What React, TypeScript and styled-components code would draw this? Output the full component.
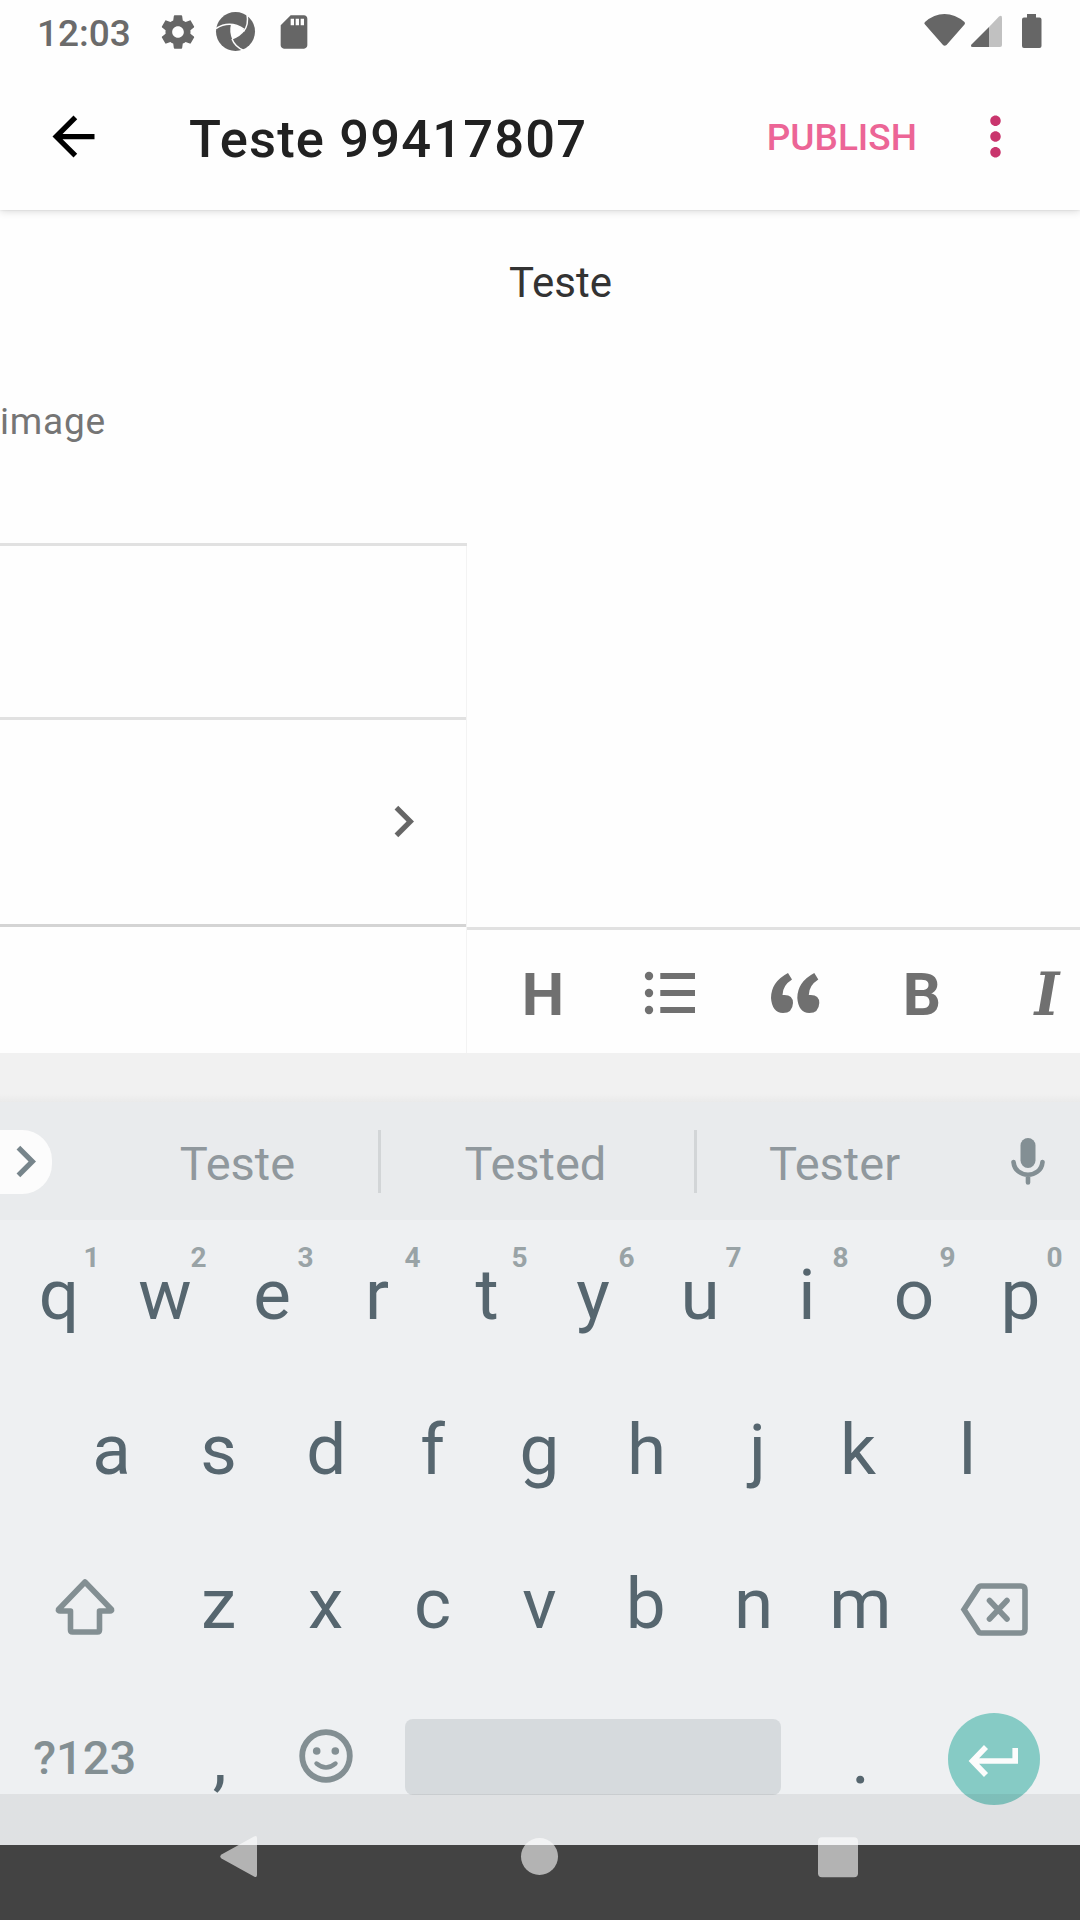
import React from "react";
import styled, { createGlobalStyle } from "styled-components";

const Global = createGlobalStyle`
  * { box-sizing: border-box; }
  body { margin: 0; background: #fff; font-family: Roboto, "Liberation Sans", sans-serif; }
  svg { display: block; flex: none; overflow: visible; }
`;

const Screen = styled.div`
  position: relative;
  width: 1080px;
  height: 1920px;
  overflow: hidden;
  display: flex;
  flex-direction: column;
  background: #fefefe;
`;

const StatusBar = styled.header`
  height: 63px;
  flex: none;
  display: flex;
  justify-content: space-between;
  padding: 0 38px 0 37px;
  color: #666;
`;

const StatusGroup = styled.div<{ $gap: number }>`
  display: flex;
  align-items: center;
  gap: ${(p) => p.$gap}px;
`;

const Clock = styled.span`
  font-size: 37px;
  font-weight: 500;
  line-height: 44px;
  margin-right: 9px;
  padding-top: 5px;
  color: #6b6b6b;
`;

const AppBar = styled.div`
  position: relative;
  z-index: 1;
  height: 147px;
  flex: none;
  display: flex;
  align-items: center;
  padding: 0 53px 0 42px;
  background: #fefefe;
  box-shadow: 0 1px 8px rgba(0, 0, 0, 0.16), 0 0 2px rgba(0, 0, 0, 0.1);
  clip-path: inset(0 0 -14px 0);
`;

const Title = styled.h1`
  flex: 1;
  margin: 0 0 0 84px;
  font-size: 52.5px;
  line-height: 62px;
  font-weight: 500;
  letter-spacing: 1.15px;
  color: #212121;
  padding-top: 4px;
`;

const Publish = styled.button`
  border: 0;
  padding: 2px 0 0;
  margin-right: 47px;
  background: none;
  font: 500 37px/44px Roboto, sans-serif;
  color: #ec6596;
`;

const Body = styled.main`
  height: 843px;
  flex: none;
  display: flex;
`;

const SettingsPane = styled.section`
  width: 467px;
  flex: none;
  display: flex;
  flex-direction: column;
`;

const SettingsRow = styled.div<{ $height: number; $line?: string }>`
  height: ${(p) => p.$height}px;
  display: flex;
  align-items: center;
  border-bottom: ${(p) => (p.$line ? `3px solid ${p.$line}` : "0")};
`;

const Divided = styled.div`
  flex: 1;
  border-right: 1px solid #f3f3f3;
`;

const Label = styled.span`
  padding-top: 90px;
  font-size: 37px;
  line-height: 44px;
  letter-spacing: 0.8px;
  color: #757575;
`;

const ChevronSlot = styled.span`
  margin: 0 0 2px 372px;
  color: #666;
`;

const EditorPane = styled.section`
  flex: 1;
  min-width: 0;
  display: flex;
  flex-direction: column;
`;

const EditorText = styled.div`
  flex: 1;
  padding: 48px 42px;
  font-size: 42px;
  line-height: 50px;
  color: #333;
`;

const Toolbar = styled.div`
  height: 126px;
  display: flex;
  align-items: center;
  overflow: hidden;
  border-top: 3px solid #e1e1e1;
  color: #707070;
`;

const Tool = styled.span<{ $width: number; $drop: number }>`
  flex: none;
  width: ${(p) => p.$width}px;
  display: flex;
  justify-content: center;
  padding-top: ${(p) => p.$drop}px;
  font-size: 60px;
  line-height: 70px;
  font-weight: 700;
`;

const ItalicMark = styled.span`
  font-family: "DejaVu Serif Condensed", "DejaVu Serif", serif;
  font-style: italic;
  font-stretch: condensed;
  font-size: 59px;
`;

const Spacer = styled.div`
  height: 49px;
  flex: none;
  background: linear-gradient(#f1f1f1 0 84%, #eaeaea 100%);
`;

const Suggestions = styled.div`
  height: 118px;
  flex: none;
  display: flex;
  align-items: center;
  background: #e9ebed;
`;

const Expand = styled.span`
  width: 52px;
  height: 64px;
  margin: 1px 45px 0 0;
  padding-right: 2px;
  border-radius: 0 30px 30px 0;
  background: #fcfcfc;
  color: #77858b;
  display: flex;
  align-items: center;
  justify-content: center;
`;

const Suggestion = styled.span<{ $width: number; $trim?: number }>`
  width: ${(p) => p.$width}px;
  padding: 6px ${(p) => p.$trim ?? 0}px 0 0;
  text-align: center;
  font-size: 47px;
  line-height: 56px;
  color: #90989d;
`;

const Separator = styled.i`
  width: 3px;
  height: 63px;
  background: #d2d5d7;
`;

const MicSlot = styled.span`
  margin-left: 37px;
`;

const Keys = styled.div`
  flex: 1;
  background: #eef0f2;
`;

const KeyRow = styled.div`
  height: 154.5px;
  display: flex;
  justify-content: center;
  padding: 0 5.5px 0 4.5px;
`;

const Key = styled.span<{ $wide?: boolean; $small?: boolean; $drop?: number }>`
  position: relative;
  width: ${(p) => (p.$wide ? 160.5 : 107)}px;
  flex: none;
  display: flex;
  align-items: center;
  justify-content: center;
  padding-top: ${(p) => Math.max(0, (p.$drop ?? 0) * 2)}px;
  padding-bottom: ${(p) => 5 + Math.max(0, (p.$drop ?? 0) * -2)}px;
  font-size: ${(p) => (p.$small ? 47 : 71)}px;
  font-weight: ${(p) => (p.$small ? 500 : 400)};
  color: ${(p) => (p.$small ? "#838f93" : "#56666f")};
`;

const Letter = styled.span<{ $shift: number }>`
  transform: translateX(${(p) => p.$shift}px);
`;

const Hint = styled.sup`
  position: absolute;
  top: 21px;
  left: 77px;
  width: 20px;
  text-align: center;
  font-size: 28px;
  line-height: 34px;
  font-weight: 700;
  color: #99a3a6;
`;

const SpaceBar = styled.span`
  width: 376px;
  height: 76px;
  margin: 35px 26px 0;
  border-radius: 8px;
  background: #d6dadd;
`;

const Enter = styled.span`
  width: 92px;
  height: 92px;
  margin-top: 2px;
  border-radius: 50%;
  background: #86cbc5;
  display: flex;
  align-items: center;
  justify-content: center;
`;

const NavBar = styled.nav`
  position: absolute;
  left: 0;
  right: 0;
  bottom: 0;
  height: 126px;
  display: flex;
  justify-content: center;
  gap: 261px;
  padding: 41px 2px 0 0;
  background: linear-gradient(rgba(0, 0, 0, 0.063) 0 51px, #434343 51px);
`;

const Chevron = () => (
  <svg width="63" height="63" viewBox="0 0 24 24" fill="currentColor">
    <path d="M10 6 8.59 7.41 13.17 12l-4.58 4.59L10 18l6-6z" />
  </svg>
);

const TOP = "qwertyuiop".split("");
const HOME = "asdfghjkl".split("");
const LOW = "zxcvbnm".split("");

// Optical centring: offsets each glyph so its ink sits in the middle of the key.
const OPTICAL: Record<string, number> = {
  r: -1.9,
  k: -2.4,
  j: 4,
  p: -0.6,
  b: -0.8,
  q: 0.9,
  d: 0.8,
  t: 1,
  ",": 1.2,
};

const Glyph = ({ char }: { char: string }) => (
  <Letter $shift={OPTICAL[char] ?? 0}>{char}</Letter>
);

export default function App() {
  return (
    <Screen>
      <Global />
      <StatusBar>
        <StatusGroup $gap={18}>
          <Clock>12:03</Clock>
          <svg width="40" height="40" viewBox="0 0 24 24" fill="currentColor">
            <path d="M19.43 12.98c.04-.32.07-.64.07-.98s-.03-.66-.07-.98l2.11-1.65c.19-.15.24-.42.12-.64l-2-3.46c-.12-.22-.39-.3-.61-.22l-2.49 1c-.52-.4-1.08-.73-1.69-.98l-.38-2.65C14.46 2.18 14.25 2 14 2h-4c-.25 0-.46.18-.49.42l-.38 2.65c-.61.25-1.17.59-1.69.98l-2.49-1c-.23-.09-.49 0-.61.22l-2 3.46c-.13.22-.07.49.12.64l2.11 1.65c-.04.32-.07.65-.07.98s.03.66.07.98l-2.11 1.65c-.19.15-.24.42-.12.64l2 3.46c.12.22.39.3.61.22l2.49-1c.52.4 1.08.73 1.69.98l.38 2.65c.03.24.24.42.49.42h4c.25 0 .46-.18.49-.42l.38-2.65c.61-.25 1.17-.59 1.69-.98l2.49 1c.23.09.49 0 .61-.22l2-3.46c.12-.22.07-.49-.12-.64l-2.11-1.65zM12 15.5c-1.93 0-3.500-1.57-3.500-3.500s1.57-3.500 3.500-3.500 3.500 1.57 3.500 3.500-1.57 3.500-3.500 3.500z" />
          </svg>
          <svg width="40" height="39" viewBox="0 0 40 39">
            <circle cx="19.500" cy="19.500" r="19.500" fill="currentColor" />
            <g fill="none" stroke="#fefefe" strokeWidth="1.500">
              <path d="M0 16.500Q14 7.500 28.500 17.500" />
              <path d="M31 2Q33 13 27.500 19.500" />
              <path d="M28 38.500Q19 35 16 27" />
            </g>
            <path d="M15 12.500Q22.500 13 28.800 18.500Q24.500 24.500 16.300 27.500Q13 19.500 15 12.500z" fill="#fefefe" />
          </svg>
          <svg width="40" height="40" viewBox="0 0 24 24" fill="currentColor">
            <path d="M18 2h-8L4.020 8 4 20c0 1.100.9 2 2 2h12c1.100 0 2-.9 2-2V4c0-1.100-.9-2-2-2zm-6 6h-2V4h2v4zm3 0h-2V4h2v4zm3 0h-2V4h2v4z" />
          </svg>
        </StatusGroup>
        <StatusGroup $gap={0}>
          <svg width="118" height="63" viewBox="924 0 118 63" fill="currentColor">
            <path d="M925 22Q934 14 944.500 14T964.500 22Q965.500 23 964.500 24.500L946.500 45Q944.500 46.500 943 45L925 24.500Q923.500 23 925 22z" />
            <path d="M999 16.500Q1002 14.500 1002 18V45Q1002 47 1000 47H989V27z" opacity=".4" />
            <path d="M989 27V47H972.500Q970 46.500 971.500 44.500z" />
            <path d="M1027 14h9v3.500h3.500q2 0 2 2V46q0 2-2 2h-15.500q-2 0-2-2V19.500q0-2 2-2h3z" />
          </svg>
        </StatusGroup>
      </StatusBar>

      <AppBar>
        <svg width="63" height="63" viewBox="0 0 24 24" fill="#000">
          <path d="M20 11H7.830l5.590-5.590L12 4l-8 8 8 8 1.410-1.410L7.830 13H20v-2z" />
        </svg>
        <Title>Teste 99417807</Title>
        <Publish>PUBLISH</Publish>
        <svg width="63" height="63" viewBox="0 0 24 24" fill="#c9356d">
          <path d="M12 8c1.100 0 2-.9 2-2s-.9-2-2-2-2 .9-2 2 .9 2 2 2zm0 2c-1.100 0-2 .9-2 2s.9 2 2 2 2-.9 2-2-.9-2-2-2zm0 6c-1.100 0-2 .9-2 2s.9 2 2 2 2-.9 2-2-.9-2-2-2z" />
        </svg>
      </AppBar>

      <Body>
        <SettingsPane>
          <SettingsRow $height={336} $line="#e1e1e1">
            <Label>image</Label>
          </SettingsRow>
          <Divided>
            <SettingsRow $height={174} $line="#e1e1e1" />
            <SettingsRow $height={207} $line="#d4d4d4">
              <ChevronSlot>
                <Chevron />
              </ChevronSlot>
            </SettingsRow>
          </Divided>
        </SettingsPane>
        <EditorPane>
          <EditorText>Teste</EditorText>
          <Toolbar>
            <Tool $width={152} $drop={6}>H</Tool>
            <Tool $width={102} $drop={3}>
              <svg width="50" height="44" viewBox="0 0 50 44" fill="currentColor">
                <circle cx="4" cy="5" r="4.200" />
                <circle cx="4" cy="22" r="4.200" />
                <circle cx="4" cy="39" r="4.200" />
                <path d="M15.300 2H50v6H15.300zM15.300 19H50v6H15.300zM15.300 36H50v6H15.300z" />
              </svg>
            </Tool>
            <Tool $width={148} $drop={3}>
              <svg width="48" height="40" viewBox="0 0 48 40" fill="currentColor">
                <path d="M17 0L21 6.500Q11.500 12.500 11.500 22Q22 21 22 30Q21.500 40 12 40Q1 39.500 0 25Q0 9 17 0z" />
                <path transform="translate(26.3)" d="M17 0L21 6.500Q11.500 12.500 11.500 22Q22 21 22 30Q21.500 40 12 40Q1 39.500 0 25Q0 9 17 0z" />
              </svg>
            </Tool>
            <Tool $width={106} $drop={6}>B</Tool>
            <Tool $width={144} $drop={6}>
              <ItalicMark>I</ItalicMark>
            </Tool>
          </Toolbar>
        </EditorPane>
      </Body>

      <Spacer />
      <Suggestions>
        <Expand>
          <Chevron />
        </Expand>
        <Suggestion $width={281}>Teste</Suggestion>
        <Separator />
        <Suggestion $width={313} $trim={4}>Tested</Suggestion>
        <Separator />
        <Suggestion $width={277} $trim={2}>Tester</Suggestion>
        <MicSlot>
          <svg width="34" height="47" viewBox="0 0 34 47">
            <rect x="9.500" width="15" height="30" rx="7.500" fill="#838f94" />
            <path d="M2.500 24C4 41 30 41 31.500 24M17 37V44.500" fill="none" stroke="#838f94" strokeWidth="4.600" strokeLinecap="round" />
          </svg>
        </MicSlot>
      </Suggestions>

      <Keys>
        <KeyRow>
          {TOP.map((k, i) => (
            <Key key={k}>
              <Glyph char={k} />
              <Hint>{(i + 1) % 10}</Hint>
            </Key>
          ))}
        </KeyRow>
        <KeyRow>
          {HOME.map((k) => (
            <Key key={k}>
              <Glyph char={k} />
            </Key>
          ))}
        </KeyRow>
        <KeyRow>
          <Key $wide $small $drop={3}>
            <svg width="60" height="57" viewBox="0 0 60 57" fill="none" stroke="#838f93" strokeWidth="5.600" strokeLinejoin="round">
              <path d="M30 4L56.500 31.500Q57 33 55 33H44.500V52Q44.500 54 42.500 54H17.500Q15.500 54 15.500 52V33H5Q3 33 3.500 31.500z" />
            </svg>
          </Key>
          {LOW.map((k) => (
            <Key key={k}>
              <Glyph char={k} />
            </Key>
          ))}
          <Key $wide $small $drop={6}>
            <svg width="67" height="53" viewBox="0 0 67 53" fill="none" stroke="#838f93" strokeWidth="5.600">
              <path d="M20 3H60Q64 3 64 7V46Q64 50 60 50H20Q18 50 17 48L3 26.500L17 5Q18 3 20 3z" />
              <path d="M28.500 17.500L46 36M46 17.500L28.500 36" strokeLinecap="round" />
            </svg>
          </Key>
        </KeyRow>
        <KeyRow>
          <Key $wide $small $drop={-1}>?123</Key>
          <Key>
            <Glyph char="," />
          </Key>
          <Key $small $drop={-2}>
            <svg width="54" height="54" viewBox="0 0 54 54" fill="none" stroke="#838f93">
              <circle cx="27" cy="27" r="23.800" strokeWidth="5.800" />
              <circle cx="17.700" cy="22" r="3.800" fill="#838f93" stroke="none" />
              <circle cx="36.300" cy="22" r="3.800" fill="#838f93" stroke="none" />
              <path d="M17.500 34.500Q27 42.500 36.500 34.500" strokeWidth="4.400" strokeLinecap="round" />
            </svg>
          </Key>
          <SpaceBar />
          <Key>
            <Glyph char="." />
          </Key>
          <Key $wide $small>
            <Enter>
              <svg width="50" height="26" viewBox="0 0 50 26" fill="none" stroke="#fcfcfc" strokeWidth="5.600">
                <path d="M46.200 2V15H4M17 1L3.500 15L17 29" />
              </svg>
            </Enter>
          </Key>
        </KeyRow>
      </Keys>

      <NavBar>
        <svg width="38" height="43" viewBox="0 0 38 43" fill="#fff" fillOpacity=".6">
          <path d="M34 1.500Q37 0 37 3V40Q37 43 34 41.500L1.500 23.500Q-1 21.500 1.500 19.500z" />
        </svg>
        <svg width="38" height="43" viewBox="0 0 38 43" fill="#fff" fillOpacity=".6">
          <circle cx="20.500" cy="21.500" r="18.500" />
        </svg>
        <svg width="40" height="43" viewBox="0 0 40 43" fill="#fff" fillOpacity=".6">
          <rect y="2.300" width="40" height="40" rx="4" />
        </svg>
      </NavBar>
    </Screen>
  );
}
